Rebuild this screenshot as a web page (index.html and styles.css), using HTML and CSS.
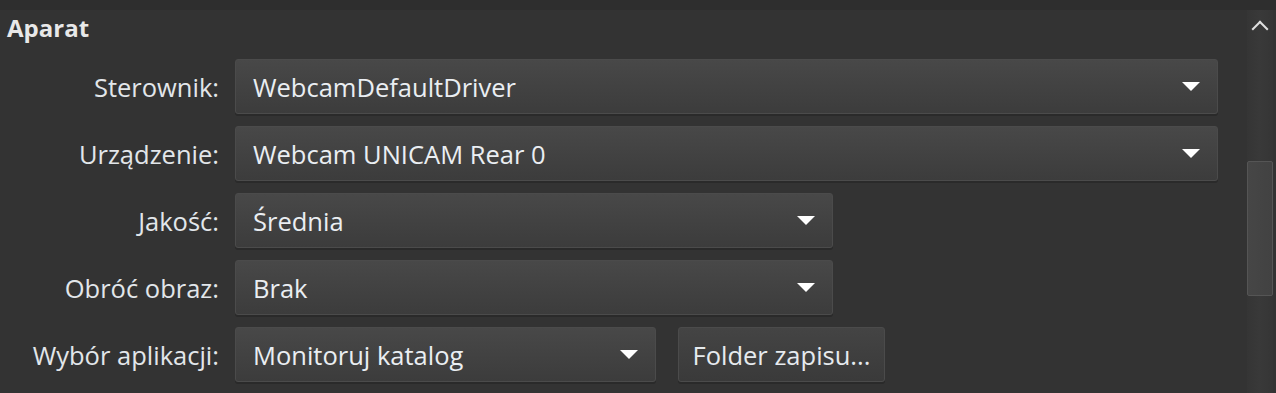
FILE: index.html
```html
<!DOCTYPE html>
<html>
<head>
  <meta charset="utf-8">
  <link rel="stylesheet" href="styles.css">
</head>
<body>
  <div class="topbar"></div>
  <div class="page">
    <div class="content">
      <h2 class="section-title">Aparat</h2>
      <div class="form">
        <label class="form-label">Sterownik:</label>
        <div class="field">
          <div class="select select-wide"><span>WebcamDefaultDriver</span><i class="arrow"></i></div>
        </div>

        <label class="form-label">Urządzenie:</label>
        <div class="field">
          <div class="select select-wide"><span>Webcam UNICAM Rear 0</span><i class="arrow"></i></div>
        </div>

        <label class="form-label">Jakość:</label>
        <div class="field">
          <div class="select select-mid"><span>Średnia</span><i class="arrow"></i></div>
        </div>

        <label class="form-label">Obróć obraz:</label>
        <div class="field">
          <div class="select select-mid"><span>Brak</span><i class="arrow"></i></div>
        </div>

        <label class="form-label">Wybór aplikacji:</label>
        <div class="field">
          <div class="select select-small"><span>Monitoruj katalog</span><i class="arrow"></i></div>
          <button class="btn">Folder zapisu...</button>
        </div>
      </div>
    </div>

    <div class="scrollbar">
      <div class="scroll-up"></div>
      <div class="scroll-thumb"></div>
    </div>
  </div>
</body>
</html>
```

FILE: styles.css
```css
body {
  margin: 0;
  height: 393px;
  overflow: hidden;
  background: #333333;
  color: #e6e6e6;
  font-family: 'Open Sans', 'Noto Sans', sans-serif;
}

.topbar {
  height: 10px;
  background: #2e2e2e;
}

.page {
  display: flex;
  height: 383px;
}

.content {
  width: 1218px;
  padding-left: 7px;
  box-sizing: border-box;
}

.section-title {
  margin: 2px 0 0 0;
  height: 47px;
  font-size: 24px;
  font-weight: 700;
  color: #e8e8e8;
  line-height: 32px;
}

.form {
  display: grid;
  grid-template-columns: 212px 1fr;
  column-gap: 16px;
  row-gap: 12px;
}

.form-label {
  display: flex;
  align-items: center;
  justify-content: flex-end;
  font-size: 25.5px;
  color: #e2e6ea;
  white-space: nowrap;
}

.field {
  display: flex;
  gap: 22px;
}

.select {
  height: 55px;
  box-sizing: border-box;
  display: flex;
  align-items: center;
  justify-content: space-between;
  padding: 0 17px 0 17px;
  border: 1px solid #4b4b4b;
  border-radius: 3px;
  background: linear-gradient(180deg, #484848 0%, #3c3c3c 100%);
  box-shadow: 0 2px 0 #2a2a2a;
  font-size: 25.5px;
  color: #eaeef2;
}

.select-wide {
  width: 983px;
}

.select-mid {
  width: 598px;
}

.select-small {
  width: 421px;
}

.arrow {
  width: 0;
  height: 0;
  border-left: 9px solid transparent;
  border-right: 9px solid transparent;
  border-top: 9px solid #ffffff;
}

.btn {
  width: 207px;
  height: 55px;
  padding: 0;
  border: 1px solid #4b4b4b;
  border-radius: 3px;
  background: linear-gradient(180deg, #444444 0%, #3a3a3a 100%);
  box-shadow: 0 2px 0 #2a2a2a;
  color: #e6eaee;
  font-family: inherit;
  font-size: 25.5px;
}

.scrollbar {
  margin-left: 29px;
  width: 26px;
  display: flex;
  flex-direction: column;
  align-items: center;
  background: linear-gradient(90deg, #353535 0%, #393939 50%, #353535 100%);
}

.scroll-up {
  width: 10px;
  height: 10px;
  margin-top: 13px;
  border-left: 2px solid #e0e0e0;
  border-top: 2px solid #e0e0e0;
  transform: rotate(45deg);
}

.scroll-thumb {
  width: 26px;
  height: 135px;
  margin-top: 126px;
  box-sizing: border-box;
  border: 1px solid #555555;
  border-radius: 2px;
  background: linear-gradient(90deg, #464646 0%, #424242 100%);
}
```
